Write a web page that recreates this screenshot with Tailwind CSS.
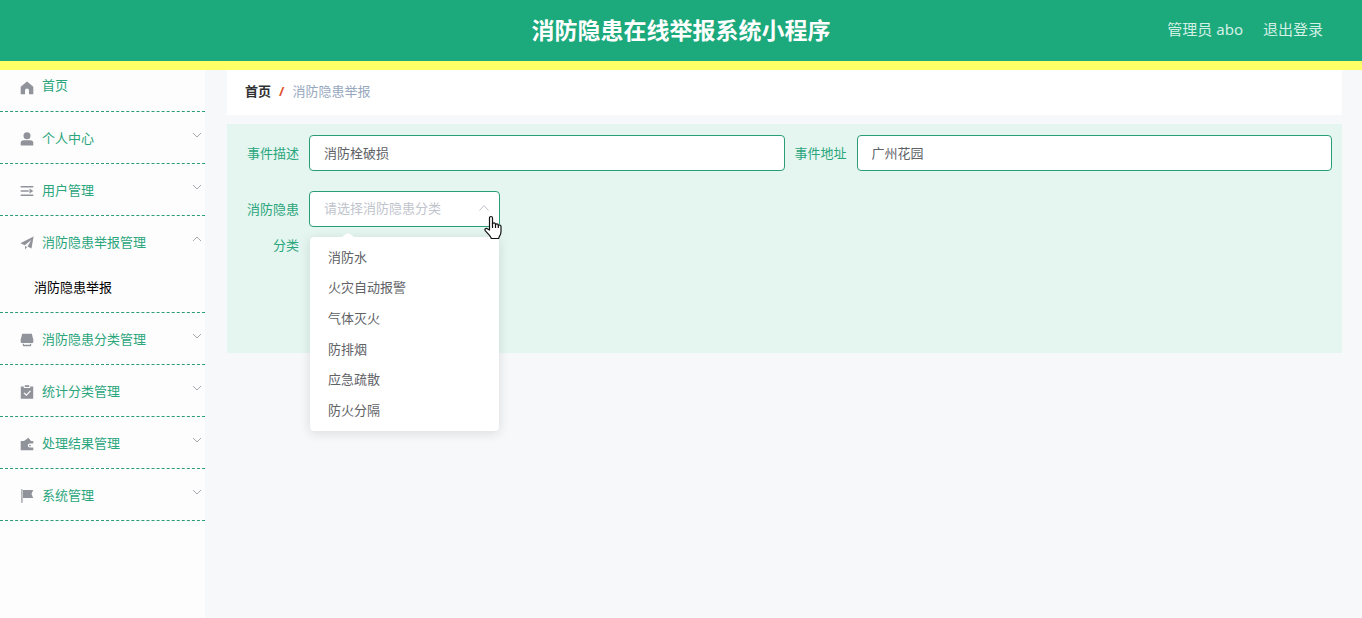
<!DOCTYPE html>
<html lang="zh-CN">
<head>
<meta charset="utf-8">
<meta name="viewport" content="width=device-width, initial-scale=1">
<title>消防隐患在线举报系统小程序</title>
<script src="https://cdn.jsdelivr.net/npm/@tailwindcss/browser@4"></script>
</head>
<body class="flex min-h-screen flex-col bg-[#f6f8fa] font-['Noto_Sans','Noto_Sans_CJK_SC',sans-serif] text-[13px] text-[#606266]">
<header class="grid grid-cols-[1fr_auto_1fr] items-center border-b-9 border-[#ffff66] bg-[#1ca97c] text-white">
  <h1 class="col-start-2 py-3 text-[23px] leading-[37px] font-bold">消防隐患在线举报系统小程序</h1>
  <div class="flex justify-end gap-5 pr-[39px] pb-0.5 text-[15px] text-[#d3f0e5]">
    <span>管理员 abo</span>
    <button type="button" class="cursor-pointer">退出登录</button>
  </div>
</header>
<div class="flex flex-1">
  <nav aria-label="主菜单" class="w-[205px] shrink-0 bg-[#fdfdfd] text-[#2aa57c]">
    <ul>
      <li class="border-b border-dashed border-[#2a9d78]">
        <a href="#" class="flex h-[41px] items-center gap-2 pr-1 pb-2.5 pl-5">
          <svg class="mt-1 size-3.5 fill-[#909399]" viewBox="0 0 14 14"><path d="M7 .5 13.300 5.800V13.300H9V9.500a2 2 0 0 0-4 0v3.800H.7V5.800z"/></svg>
          <span>首页</span>
        </a>
      </li>
      <li class="border-b border-dashed border-[#2a9d78]">
        <button type="button" class="flex h-[51px] w-full cursor-pointer items-center gap-2 pt-[3px] pr-[3px] pl-5">
          <svg class="size-3.5 fill-[#909399]" viewBox="0 0 14 14"><circle cx="7" cy="3.800" r="3.500"/><path d="M.7 13v-2.200Q.7 8.300 3.800 8.300h6.400q3.100 0 3.100 2.500V13q0 .5-.5.5H1.200Q.7 13.500.7 13z"/></svg>
          <span class="flex-1 text-left">个人中心</span>
          <svg class="mb-2 h-2 w-2.5 fill-none stroke-[#a5a8ad]" viewBox="0 0 10 8"><path d="m1 2 4 4 4-4"/></svg>
        </button>
      </li>
      <li class="border-b border-dashed border-[#2a9d78]">
        <button type="button" class="flex h-[51px] w-full cursor-pointer items-center gap-2 pt-[3px] pr-[3px] pl-5">
          <svg class="size-3.5 fill-[#909399]" viewBox="0 0 14 14"><path d="M.7 2h12.600v1.500H.7zM.7 6.300h8v1.400h-8zM.7 10.500h12.600V12H.7zM9.500 4.500 13.300 7 9.500 9.500z"/></svg>
          <span class="flex-1 text-left">用户管理</span>
          <svg class="mb-2 h-2 w-2.5 fill-none stroke-[#a5a8ad]" viewBox="0 0 10 8"><path d="m1 2 4 4 4-4"/></svg>
        </button>
      </li>
      <li class="border-b border-dashed border-[#2a9d78]">
        <button type="button" aria-expanded="true" class="flex h-[51px] w-full cursor-pointer items-center gap-2 pt-[3px] pr-[3px] pl-5">
          <svg class="size-3.5 fill-[#909399]" viewBox="0 0 14 14"><path d="M.3 7.300 13.600.5 11.500 12.500 7.500 10.500 11.300 4 4.800 9.200z"/><path d="m5 10 2.200 1.100L5 13.600z"/></svg>
          <span class="flex-1 text-left">消防隐患举报管理</span>
          <svg class="mb-2 h-2 w-2.5 fill-none stroke-[#a5a8ad]" viewBox="0 0 10 8"><path d="m1 6 4-4 4 4"/></svg>
        </button>
        <a href="#" aria-current="page" class="flex h-[45px] items-center pb-1 pl-[34px] text-black">消防隐患举报</a>
      </li>
      <li class="border-b border-dashed border-[#2a9d78]">
        <button type="button" class="flex h-[51px] w-full cursor-pointer items-center gap-2 pt-[3px] pr-[3px] pl-5">
          <svg class="size-3.5 fill-[#909399]" viewBox="0 0 14 14"><path d="M2.200.8h9.600L13.300 6.500V9q0 1-1 1H1.700Q.7 10 .7 9V6.500z"/><path d="M2.800 10.800H4v.9h6v-.9h1.200V12q0 1.200-1 1.200H3.800q-1 0-1-1.200z"/></svg>
          <span class="flex-1 text-left">消防隐患分类管理</span>
          <svg class="mb-2 h-2 w-2.5 fill-none stroke-[#a5a8ad]" viewBox="0 0 10 8"><path d="m1 2 4 4 4-4"/></svg>
        </button>
      </li>
      <li class="border-b border-dashed border-[#2a9d78]">
        <button type="button" class="flex h-[51px] w-full cursor-pointer items-center gap-2 pt-[3px] pr-[3px] pl-5">
          <svg class="size-3.5 fill-[#909399]" viewBox="0 0 14 14"><path d="M.8 1.500h3V3h6.400V1.500h3v12.200H.8z"/><path d="M4.800.2h4.400V2H4.800z"/><path d="m4 7.800 2.300 2.300 4.200-4.300" fill="none" stroke="#fff" stroke-width="1.200"/></svg>
          <span class="flex-1 text-left">统计分类管理</span>
          <svg class="mb-2 h-2 w-2.5 fill-none stroke-[#a5a8ad]" viewBox="0 0 10 8"><path d="m1 2 4 4 4-4"/></svg>
        </button>
      </li>
      <li class="border-b border-dashed border-[#2a9d78]">
        <button type="button" class="flex h-[51px] w-full cursor-pointer items-center gap-2 pt-[3px] pr-[3px] pl-5">
          <svg class="size-3.5 fill-[#909399]" viewBox="0 0 14 14"><path d="M.7 4H4L8.500.8 11 4h2.300v2.600H9.800a2 2 0 0 0 0 4h3.500V13.200H.7z"/><circle cx="10" cy="8.600" r=".9"/></svg>
          <span class="flex-1 text-left">处理结果管理</span>
          <svg class="mb-2 h-2 w-2.5 fill-none stroke-[#a5a8ad]" viewBox="0 0 10 8"><path d="m1 2 4 4 4-4"/></svg>
        </button>
      </li>
      <li class="border-b border-dashed border-[#2a9d78]">
        <button type="button" class="flex h-[51px] w-full cursor-pointer items-center gap-2 pt-[3px] pr-[3px] pl-5">
          <svg class="size-3.5 fill-[#909399]" viewBox="0 0 14 14"><path d="M1.300.3h1.200v13.400H1.300zM3 1h10.200l-1.700 3.900 1.700 4H3z"/></svg>
          <span class="flex-1 text-left">系统管理</span>
          <svg class="mb-2 h-2 w-2.5 fill-none stroke-[#a5a8ad]" viewBox="0 0 10 8"><path d="m1 2 4 4 4-4"/></svg>
        </button>
      </li>
    </ul>
  </nav>
  <main class="min-w-0 flex-1 pr-5 pl-[22px]">
    <nav aria-label="面包屑" class="flex h-[45px] items-center gap-2 bg-white px-[18px] pb-0.5">
      <a href="#" class="font-bold text-[#303133]">首页</a>
      <span class="font-bold text-[#e0532f]">/</span>
      <span class="text-[#97a8be]">消防隐患举报</span>
    </nav>
    <form class="mt-[9px] grid grid-cols-2 gap-y-5 bg-[#e5f6f0] px-2.5 pt-[11px] pb-[90px]">
      <div class="flex">
        <label for="desc" class="w-[72px] shrink-0 pr-2.5 text-right leading-9 text-[#2aa57c]">事件描述</label>
        <input id="desc" type="text" value="消防栓破损" class="h-9 min-w-0 flex-1 rounded border border-[#2a9d78] bg-white px-3.5 pb-0.5 outline-none">
      </div>
      <div class="flex">
        <label for="addr" class="w-[72px] shrink-0 pr-2.5 text-right leading-9 text-[#2aa57c]">事件地址</label>
        <input id="addr" type="text" value="广州花园" class="h-9 min-w-0 flex-1 rounded border border-[#2a9d78] bg-white px-3.5 pb-0.5 outline-none">
      </div>
      <div class="flex">
        <label for="kind" class="w-[72px] shrink-0 pr-2.5 text-right leading-9 text-[#2aa57c]">消防隐患分类</label>
        <div class="relative h-9 w-[191px]">
          <select id="kind" class="h-9 w-full appearance-none rounded border border-[#2a9d78] bg-white px-3.5 text-[#c0c4cc] outline-none">
            <option>请选择消防隐患分类</option>
          </select>
          <svg class="pointer-events-none absolute top-3 right-2.5 h-2.5 w-3 fill-none stroke-[#c0c4cc]" viewBox="0 0 12 10"><path d="m1.500 7.500 4.500-5 4.500 5"/></svg>
          <div class="absolute inset-x-px top-[46px] rounded-sm bg-white shadow-[0_2px_12px_rgba(0,0,0,0.12)]">
            <svg class="absolute -top-1 left-8 h-1 w-3 fill-white" viewBox="0 0 12 4"><path d="m0 4 4.500-3.500h3L12 4z"/></svg>
            <ul role="listbox" aria-label="消防隐患分类" class="grid h-[194px] grid-rows-6 items-center py-[5px] pl-[18px]">
              <li role="option">消防水</li>
              <li role="option">火灾自动报警</li>
              <li role="option">气体灭火</li>
              <li role="option">防排烟</li>
              <li role="option">应急疏散</li>
              <li role="option">防火分隔</li>
            </ul>
          </div>
          <svg class="pointer-events-none absolute top-6 -right-0.5 h-[25px] w-[18px]" viewBox="0 0 18 25"><path d="M5.500 15V3.200q0-1.700 1.500-1.700t1.500 1.700V9q.2-1.200 1.500-1.200T11.500 9v.8q.3-1 1.400-1 1.300 0 1.400 1.300v.6q.4-.7 1.300-.7 1.400 0 1.400 1.500v5q0 3-1.400 4.500-.8 1.300-.9 2.500H7.300q-.4-1.700-1.800-3.200L1.400 15.800q-1-1.300 0-2 1.200-.8 2.400.2z" fill="#fff" stroke="#111" stroke-width="1.200" stroke-linejoin="round"/><path d="M8.500 8.500V13M11.500 9.500V13M14.300 10.500V13" stroke="#111" stroke-width="1.200"/></svg>
        </div>
      </div>
    </form>
  </main>
</div>
</body>
</html>
